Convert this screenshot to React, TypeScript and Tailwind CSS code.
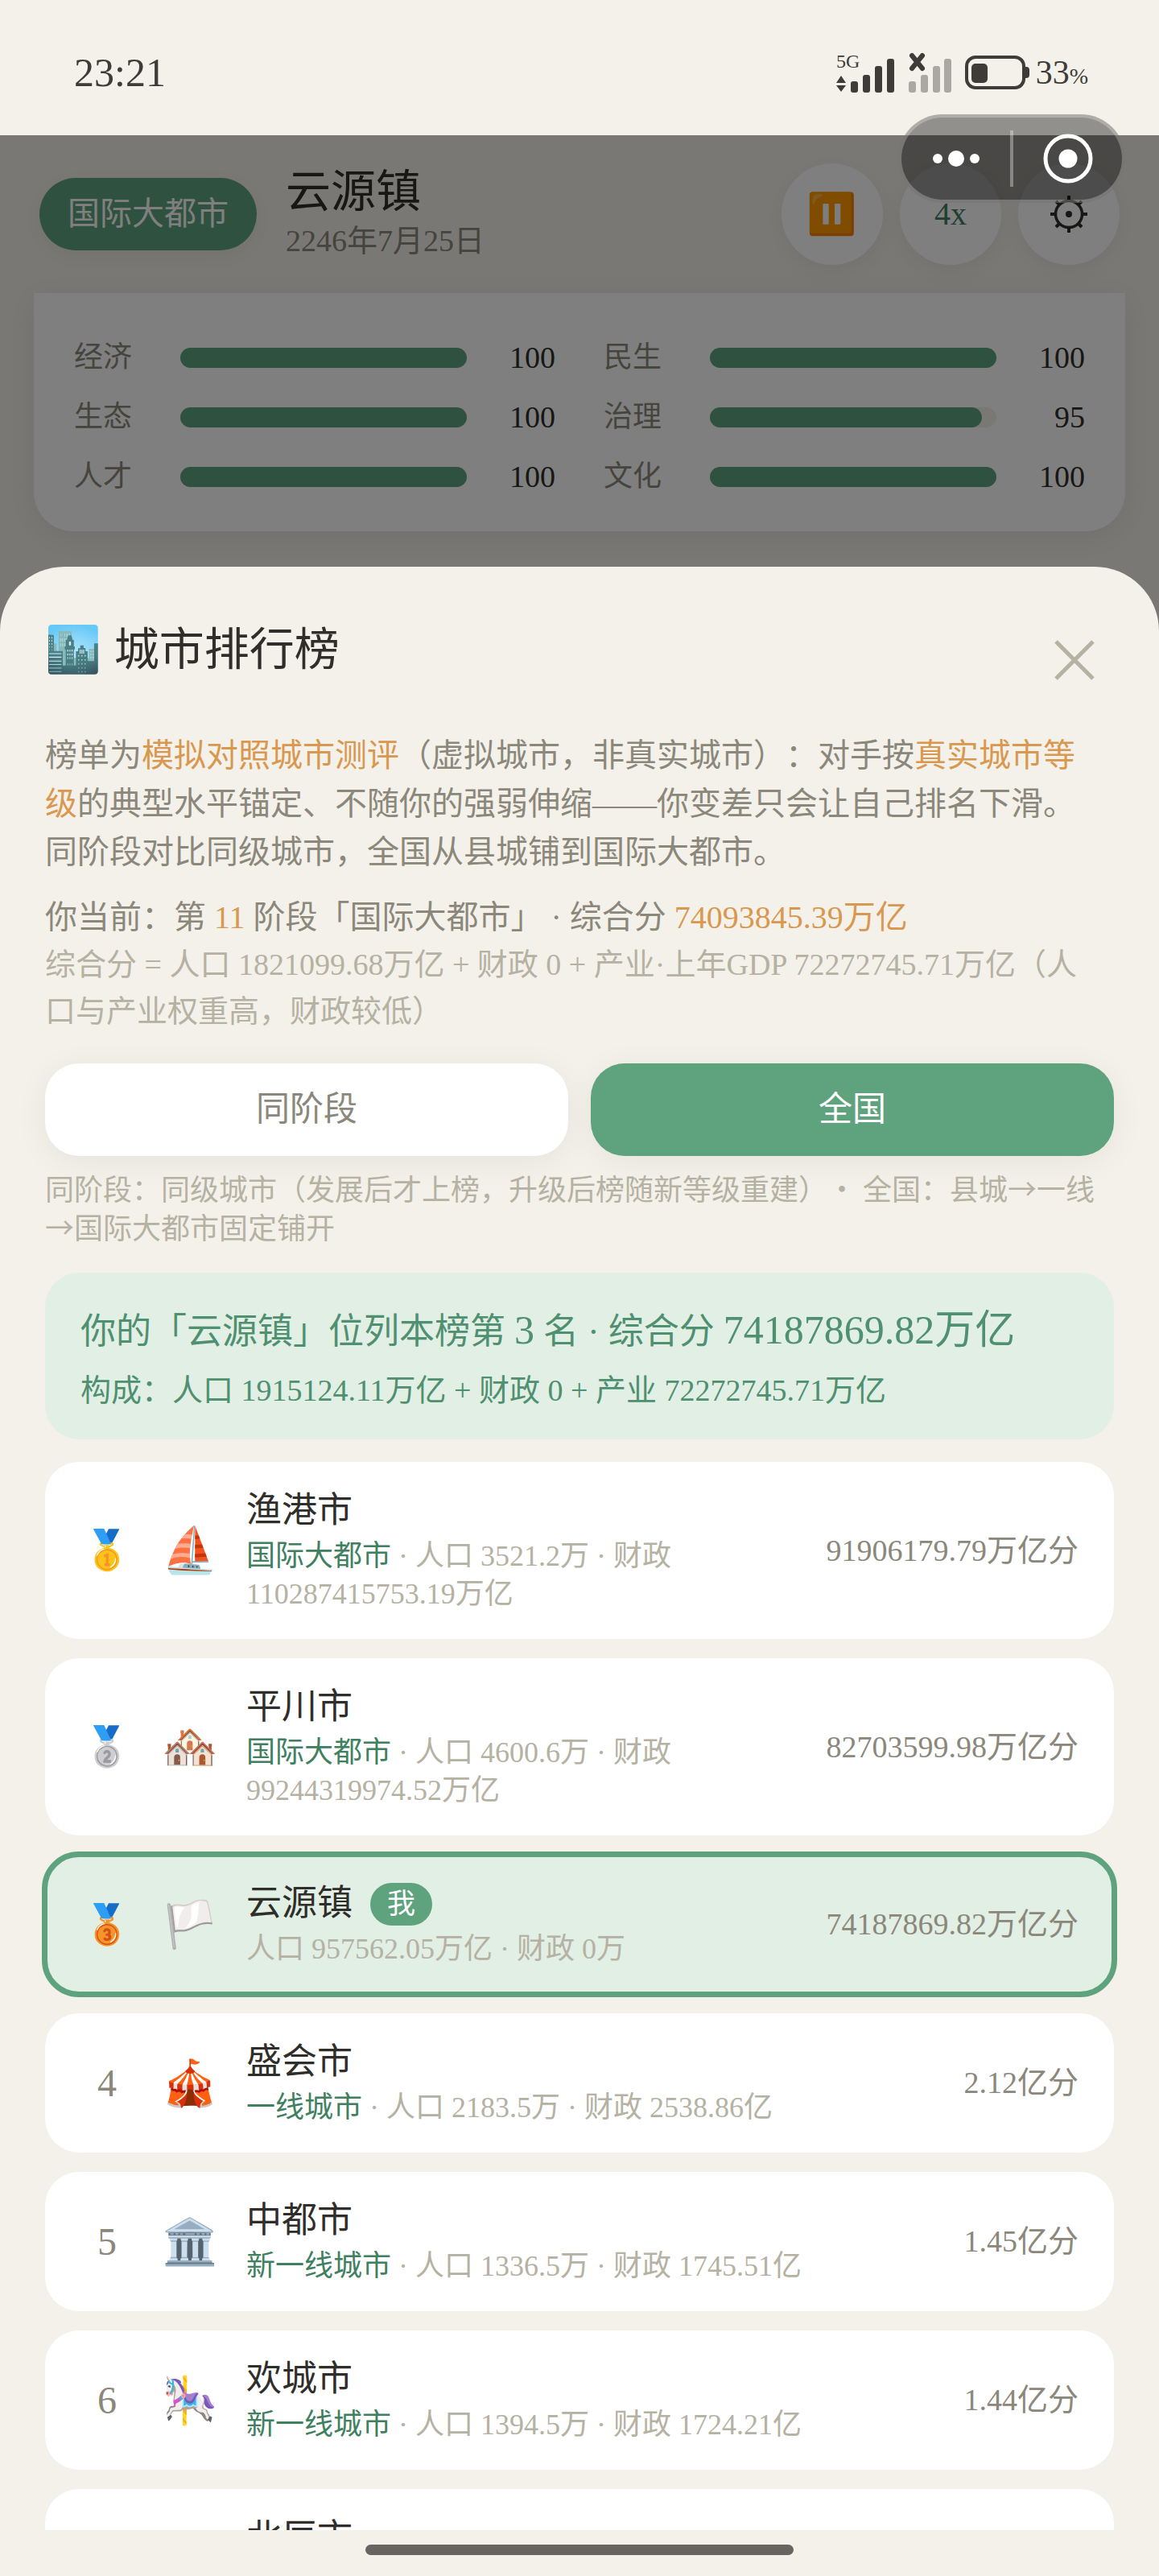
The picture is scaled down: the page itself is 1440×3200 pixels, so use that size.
interface Stat {
  label: string;
  value: number;
}

interface City {
  rank: string;
  icon: string;
  name: string;
  tier?: string;
  detail: string;
  score: string;
  mine?: boolean;
}

const stats: Stat[] = [
  { label: "经济", value: 100 },
  { label: "民生", value: 100 },
  { label: "生态", value: 100 },
  { label: "治理", value: 95 },
  { label: "人才", value: 100 },
  { label: "文化", value: 100 },
];

const cities: City[] = [
  {
    rank: "🥇",
    icon: "⛵",
    name: "渔港市",
    tier: "国际大都市",
    detail: "人口 3521.2万 · 财政 110287415753.19万亿",
    score: "91906179.79万亿分",
  },
  {
    rank: "🥈",
    icon: "🏘️",
    name: "平川市",
    tier: "国际大都市",
    detail: "人口 4600.6万 · 财政 99244319974.52万亿",
    score: "82703599.98万亿分",
  },
  {
    rank: "🥉",
    icon: "🏳️",
    name: "云源镇",
    detail: "人口 957562.05万亿 · 财政 0万",
    score: "74187869.82万亿分",
    mine: true,
  },
  {
    rank: "4",
    icon: "🎪",
    name: "盛会市",
    tier: "一线城市",
    detail: "人口 2183.5万 · 财政 2538.86亿",
    score: "2.12亿分",
  },
  {
    rank: "5",
    icon: "🏛️",
    name: "中都市",
    tier: "新一线城市",
    detail: "人口 1336.5万 · 财政 1745.51亿",
    score: "1.45亿分",
  },
  {
    rank: "6",
    icon: "🎠",
    name: "欢城市",
    tier: "新一线城市",
    detail: "人口 1394.5万 · 财政 1724.21亿",
    score: "1.44亿分",
  },
  {
    rank: "",
    icon: "",
    name: "北辰市",
    detail: "",
    score: "",
  },
];

export default function App() {
  return (
    <div className="relative flex h-screen flex-col overflow-hidden bg-[#f4f1ea] font-['Liberation_Serif','Noto_Sans_CJK_SC','Noto_Color_Emoji',serif] text-[#2f2e2a] [text-spacing-trim:space-all]">
      <StatusBar />

      <main className="relative flex min-h-0 flex-1 flex-col">
        <TownHeader />
        <StatsCard />

        {/* dims the game behind the sheet */}
        <div className="absolute inset-0 bg-black/50" />

        <RankingSheet />
      </main>

      <footer className="flex h-[57px] shrink-0 items-center justify-center pb-2">
        <div className="h-[13px] w-[37%] rounded-full bg-[#666562]" />
      </footer>

      <Capsule />
    </div>
  );
}

function StatusBar() {
  return (
    <header className="flex h-[168px] shrink-0 items-center justify-between pt-3 pr-[88px] pl-[92px] text-[#3d3c39]">
      <span className="text-[50px]">23:21</span>

      <div className="flex items-center gap-4">
        <svg className="h-[52px] w-[74px]" viewBox="0 0 74 52" fill="currentColor">
          <text x="0" y="20" fontSize="24">5G</text>
          <path d="M6 30l6 9H0zM6 50l6-8H0z" />
          <rect x="18" y="37" width="9" height="14" rx="3" />
          <rect x="33" y="29" width="9" height="22" rx="3" />
          <rect x="48" y="18" width="9" height="33" rx="3" />
          <rect x="63" y="9" width="9" height="42" rx="3" />
        </svg>

        <svg className="h-[52px] w-[54px]" viewBox="0 0 54 52">
          <g fill="#aaa8a2">
            <rect x="0" y="37" width="9" height="14" rx="3" />
            <rect x="15" y="29" width="9" height="22" rx="3" />
            <rect x="30" y="18" width="9" height="33" rx="3" />
            <rect x="44" y="9" width="9" height="42" rx="3" />
          </g>
          <path d="M4 5l13 16M17 5L4 21" stroke="currentColor" strokeWidth="6" strokeLinecap="round" />
        </svg>

        <svg className="h-[44px] w-[80px]" viewBox="0 0 80 44" fill="currentColor">
          <rect x="2" y="3" width="71" height="38" rx="11" fill="none" stroke="currentColor" strokeWidth="4" />
          <rect x="8" y="11" width="20" height="24" rx="5" />
          <path d="M75 15h1q4 0 4 4v6q0 4-4 4h-1z" />
        </svg>

        <span className="-ml-2 text-[42px]">
          33<span className="text-[28px]">%</span>
        </span>
      </div>
    </header>
  );
}

function TownHeader() {
  return (
    <div className="flex h-[196px] shrink-0 items-center justify-between px-[49px]">
      <div className="flex items-center gap-9">
        <span className="flex h-[90px] items-center rounded-[45px] bg-[#5fa37e] px-[35px] text-[40px] text-white shadow-[0_7px_28px_rgba(0,0,0,0.06)]">
          国际大都市
        </span>

        <div>
          <h1 className="text-[56px] leading-[66px]">云源镇</h1>
          <p className="text-[38px] leading-[56px] text-[#8b887b]">2246年7月25日</p>
        </div>
      </div>

      <div className="flex gap-[21px]">
        <RoundButton label="暂停">
          <span className="text-[50px]">⏸️</span>
        </RoundButton>
        <RoundButton label="速度">
          <span className="text-[40px] text-[#3f8060]">4x</span>
        </RoundButton>
        <RoundButton label="设置">
          <GearIcon />
        </RoundButton>
      </div>
    </div>
  );
}

function RoundButton({ label, children }: { label: string; children: React.ReactNode }) {
  return (
    <button
      type="button"
      aria-label={label}
      className="flex size-[126px] items-center justify-center rounded-full bg-white shadow-[0_7px_28px_rgba(0,0,0,0.06)]"
    >
      {children}
    </button>
  );
}

function GearIcon() {
  return (
    <svg className="size-[46px]" viewBox="0 0 46 46" fill="none" stroke="#2f2e2a">
      <circle cx="23" cy="23" r="16.5" strokeWidth="3.5" />
      <circle cx="23" cy="23" r="4" fill="#2f2e2a" stroke="none" />
      <path
        d="M23 0v7M23 39v7M0 23h7M39 23h7M7 7l5 5M34 34l5 5M39 7l-5 5M12 34l-5 5"
        strokeWidth="4"
      />
    </svg>
  );
}

function StatsCard() {
  return (
    <section className="mx-[42px] mb-[44px] grid shrink-0 grid-cols-2 gap-x-[60px] gap-y-[26px] rounded-b-[49px] bg-white px-[50px] pt-[56px] pb-[44px] text-[38px] leading-[48px] shadow-[0_7px_42px_rgba(0,0,0,0.08)]">
      {stats.map((stat) => (
        <div key={stat.label} className="flex items-center">
          <span className="w-[132px] text-[36px] text-[#8b887b]">{stat.label}</span>
          <div className="h-[25px] flex-1 rounded-full bg-[#f4f1ea]">
            <div className="h-full rounded-full bg-[#5fa37e]" style={{ width: `${stat.value}%` }} />
          </div>
          <span className="w-[110px] text-right">{stat.value}</span>
        </div>
      ))}
    </section>
  );
}

function RankingSheet() {
  return (
    <section className="relative min-h-0 flex-1 overflow-hidden rounded-t-[80px] bg-[#f4f1ea] px-14 pt-[59px]">
      <div className="flex items-end justify-between">
        <h2 className="mb-[18px] flex items-center gap-4 text-[56px] leading-[88px]">
          <span>🏙️</span>
          城市排行榜
        </h2>

        <button type="button" aria-label="关闭" className="flex size-[98px] items-center justify-center text-[#b5b2a3]">
          <svg className="size-[50px]" viewBox="0 0 50 50" stroke="currentColor" strokeWidth="5">
            <path d="M2 2l46 46M48 2L2 48" />
          </svg>
        </button>
      </div>

      <p className="mt-[40px] text-[40px] leading-[60px] text-[#8b887b]">
        榜单为<b className="font-normal text-[#d9984f]">模拟对照城市测评</b>（虚拟城市，非真实城市）：对手按
        <b className="font-normal text-[#d9984f]">
          真实城市等
          <br />级
        </b>
        的典型水平锚定、不随你的强弱伸缩——你变差只会让自己排名下滑。
        <br />
        同阶段对比同级城市，全国从县城铺到国际大都市。
      </p>

      <div className="mt-[22px] leading-[58px] text-[#8b887b]">
        <p className="text-[40px]">
          你当前：第 <span className="text-[#d9984f]">11</span> 阶段「国际大都市」 · 综合分{" "}
          <span className="text-[#d9984f]">74093845.39万亿</span>
        </p>
        <p className="text-[38px] text-[#b5b2a3]">
          综合分 = 人口 1821099.68万亿 + 财政 0 + 产业·上年GDP 72272745.71万亿（人
          <br />
          口与产业权重高，财政较低）
        </p>
      </div>

      <div className="mt-9 flex gap-7 text-[42px]">
        <button
          type="button"
          aria-pressed="false"
          className="h-[115px] flex-1 rounded-[42px] bg-white text-[#8b887b] shadow-[0_7px_42px_rgba(0,0,0,0.06)]"
        >
          同阶段
        </button>
        <button
          type="button"
          aria-pressed="true"
          className="h-[115px] flex-1 rounded-[42px] bg-[#5fa37e] text-white shadow-[0_7px_42px_rgba(0,0,0,0.06)]"
        >
          全国
        </button>
      </div>

      <p className="mt-[15px] font-['Noto_Sans_CJK_SC',sans-serif] text-[36px] leading-[48px] text-[#b5b2a3]">
        同阶段：同级城市（发展后才上榜，升级后榜随新等级重建）· 全国：县城→一线
        <br />
        →国际大都市固定铺开
      </p>

      <div className="mt-[34px] rounded-[42px] bg-[#e2efe5] px-[44px] pt-[34px] pb-[26px] text-[#4f9070]">
        <p className="text-[44px] leading-[75px]">
          你的「云源镇」位列本榜第 <span className="text-[50px]">3</span> 名 · 综合分{" "}
          <span className="text-[50px]">74187869.82万亿</span>
        </p>
        <p className="text-[38px] leading-[70px]">
          构成：人口 1915124.11万亿 + 财政 0 + 产业 72272745.71万亿
        </p>
      </div>

      <ol className="mt-7 flex flex-col gap-6">
        {cities.map((city) => (
          <CityRow key={city.name} city={city} />
        ))}
      </ol>
    </section>
  );
}

function CityRow({ city }: { city: City }) {
  return (
    <li
      className={
        city.mine
          ? "flex items-center gap-[35px] rounded-[42px] bg-[#e2efe5] px-[44px] py-8 outline-[7px] outline-offset-[-3px] outline-[#5fa37e]"
          : "flex items-center gap-[35px] rounded-[42px] bg-white px-[44px] py-8"
      }
    >
      <span className="flex w-[66px] shrink-0 justify-center text-[48px] text-[#8b887b]">{city.rank}</span>
      <span className="flex w-[70px] shrink-0 justify-center text-[56px] leading-[70px]">{city.icon}</span>

      <div className="min-w-0 flex-1">
        <h3 className="flex items-center gap-[22px] text-[44px] leading-[58px]">
          {city.name}
          {city.mine && (
            <span className="rounded-full bg-[#5fa37e] px-[21px] text-[35px] leading-[53px] text-white">我</span>
          )}
        </h3>
        <p className="mt-1 min-h-[47px] text-[36px] leading-[47px] text-[#b5b2a3]">
          {city.tier && <span className="text-[#3f8060]">{city.tier}</span>}
          {city.tier && " · "}
          {city.detail}
        </p>
      </div>

      <span className="shrink-0 text-[38px] text-[#8b887b]">{city.score}</span>
    </li>
  );
}

// mini-program capsule floating over the page
function Capsule() {
  return (
    <div className="absolute top-[142px] right-[42px] flex h-[110px] w-[282px] items-center rounded-full border-4 border-white/25 bg-black/40 text-white">
      <button type="button" aria-label="更多" className="flex flex-1 justify-center">
        <svg className="h-5 w-[58px]" viewBox="0 0 58 20" fill="currentColor">
          <circle cx="6" cy="10" r="6" />
          <circle cx="29" cy="10" r="10" />
          <circle cx="52" cy="10" r="6" />
        </svg>
      </button>
      <div className="h-[70px] w-1 bg-white/35" />
      <button type="button" aria-label="退出" className="flex flex-1 justify-center">
        <svg className="size-[62px]" viewBox="0 0 62 62">
          <circle cx="31" cy="31" r="28" fill="none" stroke="currentColor" strokeWidth="5" />
          <circle cx="31" cy="31" r="11.5" fill="currentColor" />
        </svg>
      </button>
    </div>
  );
}
